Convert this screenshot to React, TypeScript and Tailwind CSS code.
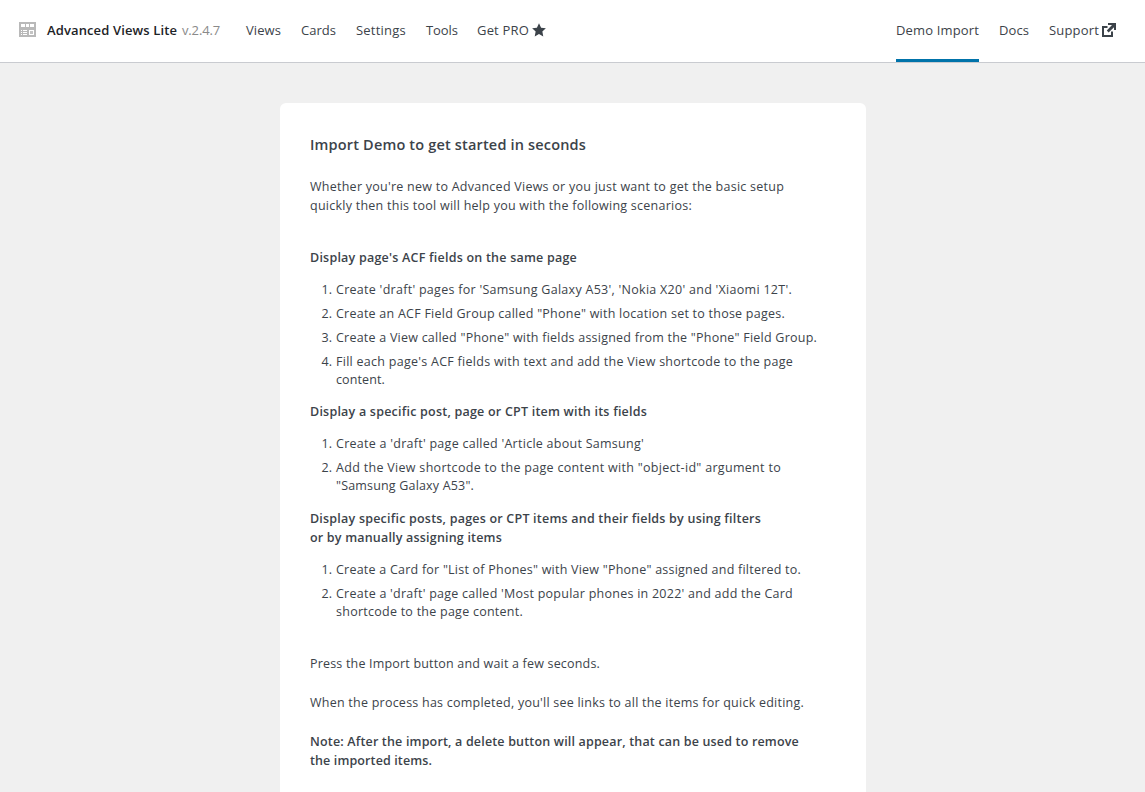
import type { ReactNode } from "react";

function Line({ t, children }: { t: string; children: ReactNode }) {
  return <span className={`block whitespace-nowrap ${t}`}>{children}</span>;
}

function Nav({ className, children }: { className: string; children: ReactNode }) {
  return (
    <a href="#" className={`flex h-[62px] shrink-0 items-center whitespace-nowrap border-b-[3px] pt-[2px] ${className}`}>
      {children}
    </a>
  );
}

function Steps({ children }: { children: ReactNode }) {
  return <ol className="mt-[14px] flex flex-col gap-[6px] leading-[18px]">{children}</ol>;
}

function Step({ n, children }: { n: number; children: ReactNode }) {
  return (
    <li className="flex">
      <span className="w-[26px] shrink-0 pr-[4px] text-right">{n}.</span>
      <div>{children}</div>
    </li>
  );
}

export default function App() {
  return (
    <div className="h-[792px] overflow-hidden bg-[#f0f0f0] font-['Open_Sans','Noto_Sans',sans-serif] text-[12.5px] text-[#3c434a]">
      <header className="flex h-[63px] items-start justify-between border-b border-[#c9cbd0] bg-white pl-[19px] text-[13px]">
        <div className="flex items-start">
          <div className="flex h-[59px] items-center">
            <svg width="17" height="15" viewBox="0 0 17 15" shapeRendering="crispEdges" aria-hidden="true">
              <path fill="#b9b9b9" d="M0 0h17v15H0z" />
              <path
                fill="#fff"
                d="M2 2h4v3H2zM7 2h3v3H7zM11 2h4v3h-4zM2 8h1v1H2zM4 8h4v1H4zM2 10h1v1H2zM4 10h4v1H4zM2 12h1v1H2zM4 12h4v1H4zM10 8h5v5h-5z"
              />
              <path fill="#c4c4c4" d="M11 9h3v3h-3z" />
            </svg>
          </div>
          <div className="ml-[11px] flex h-[61px] items-center whitespace-nowrap">
            <span className="w-[135px] font-semibold tracking-[0.122px] text-[#1d2327]">Advanced Views Lite</span>
            <span className="w-[64px] tracking-[-0.148px] text-[#8a8a8a]">v.2.4.7</span>
          </div>
          <nav className="flex">
            <Nav className="w-[55px] border-transparent tracking-[0.08px]">Views</Nav>
            <Nav className="w-[55px] border-transparent tracking-[0.025px]">Cards</Nav>
            <Nav className="w-[70px] border-transparent tracking-[0.2px]">Settings</Nav>
            <Nav className="w-[51px] border-transparent tracking-[-0.1px]">Tools</Nav>
            <Nav className="border-transparent tracking-[0.183px]">
              Get PRO
              <svg className="mb-px ml-[3px]" width="14" height="14" viewBox="0 0 20 20" aria-hidden="true">
                <path fill="#3c434a" d="M10 .5l3 6.3 6.8.8-5 4.7 1.3 6.9-6.1-3.4-6.1 3.4 1.3-6.9-5-4.7 6.8-.8z" />
              </svg>
            </Nav>
          </nav>
        </div>
        <nav className="flex w-[249px]">
          <Nav className="w-[83px] border-[#0073aa] tracking-[0.15px]">Demo Import</Nav>
          <Nav className="ml-[20px] w-[50px] border-transparent tracking-[0.081px]">Docs</Nav>
          <Nav className="border-transparent tracking-[0.175px]">
            Support
            <svg className="mb-px ml-[2px]" width="15" height="14" viewBox="0 0 15 14" aria-hidden="true">
              <path fill="#3c434a" d="M7 0h8v7h-2V4.2L7.6 9.4 5.8 7.6 11 2H7z" />
              <path fill="none" stroke="#3c434a" strokeWidth="2" d="M6.5 4H2v9h9V8.5" />
            </svg>
          </Nav>
        </nav>
      </header>

      <main className="ml-[280px] mt-[40px] w-[586px] rounded-t-[6px] bg-white px-[30px] pt-[30px] leading-[19px]">
        <h1 className="text-[14.5px] font-semibold leading-[24px]">
          <Line t="tracking-[0.17px]">Import Demo to get started in seconds</Line>
        </h1>
        <p className="mt-[20px]">
          <Line t="tracking-[0.253px]">Whether you're new to Advanced Views or you just want to get the basic setup</Line>
          <Line t="tracking-[0.254px]">quickly then this tool will help you with the following scenarios:</Line>
        </p>

        <h2 className="mt-[33px] font-semibold">
          <Line t="tracking-[0.223px]">Display page's ACF fields on the same page</Line>
        </h2>
        <Steps>
          <Step n={1}>
            <Line t="tracking-[0.278px]">Create 'draft' pages for 'Samsung Galaxy A53', 'Nokia X20' and 'Xiaomi 12T'.</Line>
          </Step>
          <Step n={2}>
            <Line t="tracking-[0.243px]">Create an ACF Field Group called "Phone" with location set to those pages.</Line>
          </Step>
          <Step n={3}>
            <Line t="tracking-[0.231px]">Create a View called "Phone" with fields assigned from the "Phone" Field Group.</Line>
          </Step>
          <Step n={4}>
            <Line t="tracking-[0.273px]">Fill each page's ACF fields with text and add the View shortcode to the page</Line>
            <Line t="tracking-[0.118px]">content.</Line>
          </Step>
        </Steps>

        <h2 className="mt-[13px] font-semibold">
          <Line t="tracking-[0.219px]">Display a specific post, page or CPT item with its fields</Line>
        </h2>
        <Steps>
          <Step n={1}>
            <Line t="tracking-[0.265px]">Create a 'draft' page called 'Article about Samsung'</Line>
          </Step>
          <Step n={2}>
            <Line t="tracking-[0.306px]">Add the View shortcode to the page content with "object-id" argument to</Line>
            <Line t="tracking-[0.175px]">"Samsung Galaxy A53".</Line>
          </Step>
        </Steps>

        <h2 className="mt-[14px] font-semibold">
          <Line t="tracking-[0.212px]">Display specific posts, pages or CPT items and their fields by using filters</Line>
          <Line t="tracking-[0.193px]">or by manually assigning items</Line>
        </h2>
        <Steps>
          <Step n={1}>
            <Line t="tracking-[0.229px]">Create a Card for "List of Phones" with View "Phone" assigned and filtered to.</Line>
          </Step>
          <Step n={2}>
            <Line t="tracking-[0.251px]">Create a 'draft' page called 'Most popular phones in 2022' and add the Card</Line>
            <Line t="tracking-[0.252px]">shortcode to the page content.</Line>
          </Step>
        </Steps>

        <p className="mt-[33px]">
          <Line t="tracking-[0.186px]">Press the Import button and wait a few seconds.</Line>
        </p>
        <p className="mt-[20px]">
          <Line t="tracking-[0.237px]">When the process has completed, you'll see links to all the items for quick editing.</Line>
        </p>
        <p className="mt-[20px] pb-[60px] font-semibold">
          <Line t="tracking-[0.171px]">Note: After the import, a delete button will appear, that can be used to remove</Line>
          <Line t="tracking-[0.116px]">the imported items.</Line>
        </p>
      </main>
    </div>
  );
}
